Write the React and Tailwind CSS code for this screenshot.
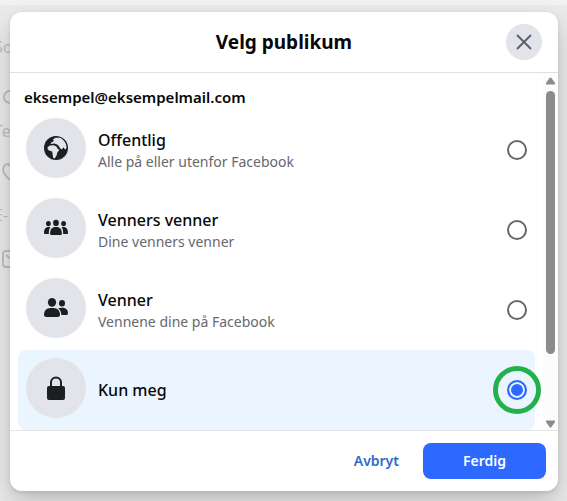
import { useState } from "react";

const GlobeIcon = () => (
  <svg viewBox="0 0 24 24" className="size-6" aria-hidden="true">
    <circle cx="12" cy="12" r="12" fill="#1c1e21" />
    <path
      d="M9 3.6 11.4 1.8 15.6 1.7C19.6 3 22.4 7 22.6 11.4L21.6 13.6 20.6 13 19.4 11.3 18 13.6 16 12.2 14.8 10 13.2 8.4 10.4 7.6 6.6 8 7.2 6.4 9.8 5.2Z"
      fill="#e2e4e9"
    />
    <path
      d="M3.6 11.2 6 9.4 9.8 9.2 12.4 10.6 13.8 13 15.4 13.8 13.2 16.8 12.6 19.6 10.6 22.4 9.2 22 8.6 18.4 8.2 15.4 5 14.6 3.6 13Z"
      fill="#e2e4e9"
    />
  </svg>
);

const GroupIcon = () => (
  <svg viewBox="0 0 24 24" className="size-6" fill="#1c1e21" aria-hidden="true">
    <ellipse cx="12" cy="6.9" rx="2.9" ry="3.1" />
    <ellipse cx="4.4" cy="7.6" rx="2.4" ry="2.6" />
    <ellipse cx="19.6" cy="7.6" rx="2.4" ry="2.6" />
    <path d="M6.2 18.2c-.3-4.6 1.7-7.1 5.8-7.1s6.1 2.5 5.8 7.1c0 .6-.4.8-1 .8H7.2c-.6 0-1-.2-1-.8Z" />
    <path d="M6.4 11.4C2.2 10.2 0 12.8 0 16.8c0 .8.3 1.2 1 1.2h3.9c-.2-2.8.1-5 1.5-6.6Z" />
    <path d="M17.6 11.4c4.2-1.2 6.4 1.4 6.4 5.4 0 .8-.3 1.2-1 1.2h-3.9c.2-2.8-.1-5-1.5-6.6Z" />
  </svg>
);

const FriendsIcon = () => (
  <svg viewBox="0 0 24 24" className="size-6" fill="#1c1e21" aria-hidden="true">
    <ellipse cx="8" cy="6.3" rx="4.1" ry="4.4" />
    <ellipse cx="18" cy="7.3" rx="3" ry="3.2" />
    <path d="M0 18.6C0 14.8 2.8 12 6.6 12h2.8c3.8 0 6.6 2.8 6.6 6.6 0 1.4-.8 2.4-2.2 2.4H2.2C.8 21 0 20 0 18.6Z" />
    <path d="M14.3 12.5c1-.5 2-.7 3.1-.7h1.2c3 0 5.4 2.2 5.4 5.1 0 1.2-.7 2.1-1.9 2.1h-4.7c0-2.6-1.2-5.1-3.1-6.5Z" />
  </svg>
);

const LockIcon = () => (
  <svg viewBox="0 0 24 24" className="size-6" aria-hidden="true">
    <path
      d="M7 11V6.5a5 5 0 0 1 10 0V11"
      fill="none"
      stroke="#1c1e21"
      strokeWidth="2"
    />
    <rect x="3" y="10" width="18" height="14" rx="2" fill="#1c1e21" />
  </svg>
);

const options = [
  {
    id: "public",
    title: "Offentlig",
    text: "Alle på eller utenfor Facebook",
    icon: GlobeIcon,
  },
  {
    id: "friends-of-friends",
    title: "Venners venner",
    text: "Dine venners venner",
    icon: GroupIcon,
  },
  {
    id: "friends",
    title: "Venner",
    text: "Vennene dine på Facebook",
    icon: FriendsIcon,
  },
  { id: "only-me", title: "Kun meg", icon: LockIcon },
];

const Option = ({ option, checked, onChange }) => {
  const Icon = option.icon;

  return (
    <label
      className={`flex h-20 cursor-pointer items-center rounded-lg px-2 ${
        checked ? "bg-[#ebf5ff]" : "bg-white"
      }`}
    >
      <span className="mb-1 flex size-15 shrink-0 items-center justify-center rounded-full bg-[#e2e4e9]">
        <Icon />
      </span>
      <span className="ml-3 flex-1">
        <span className="block text-base leading-6 font-medium text-[#080809]">
          {option.title}
        </span>
        {option.text && (
          <span className="block text-sm leading-5 text-[#65686c]">
            {option.text}
          </span>
        )}
      </span>
      <span className="relative flex size-5 shrink-0">
        <input
          type="radio"
          name="audience"
          value={option.id}
          checked={checked}
          onChange={onChange}
          className="size-5 appearance-none rounded-full border-2 border-[#65686c] bg-white checked:border-[#2d68ff] checked:bg-[#2d68ff] checked:shadow-[inset_0_0_0_2px_#ebf5ff]"
        />
        {checked && (
          <span className="pointer-events-none absolute -inset-3.5 rounded-full border-5 border-[#22b14c]" />
        )}
      </span>
    </label>
  );
};

// Contact details page, dimmed behind the dialog
const Backdrop = () => (
  <div
    className="absolute inset-0 overflow-hidden border-t-5 border-[#f2f2f2] bg-[#ebebeb] text-base text-[#c0c0c0]"
    aria-hidden="true"
  >
    <div className="-ml-1.5 flex flex-col pt-[30px]">
      <span className="h-10">So</span>
      <svg viewBox="0 0 20 20" className="mt-3 ml-2 size-5" fill="none" stroke="currentColor" strokeWidth="2">
        <circle cx="8" cy="10" r="6" />
      </svg>
      <span className="mt-3 h-10">Te</span>
      <svg viewBox="0 0 20 20" className="mt-1 ml-2 size-5" fill="none" stroke="currentColor" strokeWidth="2">
        <path d="M9 8C11 6 8 2 6 1 3 1 1 4 1 7c1 5 6 10 11 12" />
      </svg>
      <span className="mt-5 h-10">E-</span>
      <svg viewBox="0 0 20 20" className="mt-1.5 ml-2 size-5" fill="none" stroke="currentColor" strokeWidth="2">
        <rect x="1" y="2" width="18" height="16" rx="3" />
        <path d="m4 6 6 5 6-5" />
      </svg>
    </div>
  </div>
);

const Scrollbar = () => (
  <div
    className="flex w-[15px] shrink-0 flex-col items-center justify-between bg-[#fcfcfc] pt-1 pb-0.5"
    aria-hidden="true"
  >
    <svg viewBox="0 0 9 8" className="h-2 w-[9px]" fill="#8b8b8b">
      <path d="M3.5 1Q4.5 0 5.5 1L9 6v1.5H0V6Z" />
    </svg>
    <div className="mt-1.5 mb-auto h-3/4 w-[9px] rounded-full bg-[#8b8b8b]" />
    <svg viewBox="0 0 9 8" className="h-2 w-[9px]" fill="#8b8b8b">
      <path d="M3.5 7Q4.5 8 5.5 7L9 2V.5H0V2Z" />
    </svg>
  </div>
);

const App = () => {
  const [audience, setAudience] = useState("only-me");

  return (
    <main className="relative min-h-screen font-['Noto_Sans',sans-serif]">
      <Backdrop />
      <div className="relative pt-3 pr-[9px] pb-2.5 pl-2.5">
        <section
          role="dialog"
          aria-labelledby="dialog-title"
          className="overflow-hidden rounded-xl bg-white shadow-[0_12px_28px_rgba(0,0,0,0.2),0_2px_4px_rgba(0,0,0,0.1)]"
        >
          {/* Header */}
          <header className="grid grid-cols-[1fr_auto_1fr] items-center border-b border-[#dddfe2] px-4 py-3">
            <h1
              id="dialog-title"
              className="col-start-2 text-[19px] leading-7 font-bold text-[#080809]"
            >
              Velg publikum
            </h1>
            <button
              type="button"
              aria-label="Lukk"
              className="flex size-9 items-center justify-center justify-self-end rounded-full bg-[#e2e4e9]"
            >
              <svg viewBox="0 0 16 16" className="size-4" stroke="#5a626c" strokeWidth="2">
                <path d="m1 1 14 14M15 1 1 15" />
              </svg>
            </button>
          </header>

          {/* Audience list */}
          <div className="flex">
            <fieldset className="min-w-0 flex-1 px-2">
              <legend className="h-[37px] px-1.5 pt-3 text-[15px] leading-6 font-semibold text-[#080809]">
                eksempel@eksempelmail.com
              </legend>
              {options.map((option) => (
                <Option
                  key={option.id}
                  option={option}
                  checked={audience === option.id}
                  onChange={() => setAudience(option.id)}
                />
              ))}
            </fieldset>
            <Scrollbar />
          </div>

          {/* Footer */}
          <footer className="flex items-center justify-end gap-1 border-t border-[#e5e5e5] p-3 text-sm font-semibold">
            <button type="button" className="h-9 px-5 text-[#3269c7]">
              Avbryt
            </button>
            <button
              type="button"
              className="h-9 rounded-lg bg-[#2d68ff] px-10 text-white"
            >
              Ferdig
            </button>
          </footer>
        </section>
      </div>
    </main>
  );
};

export default App;
